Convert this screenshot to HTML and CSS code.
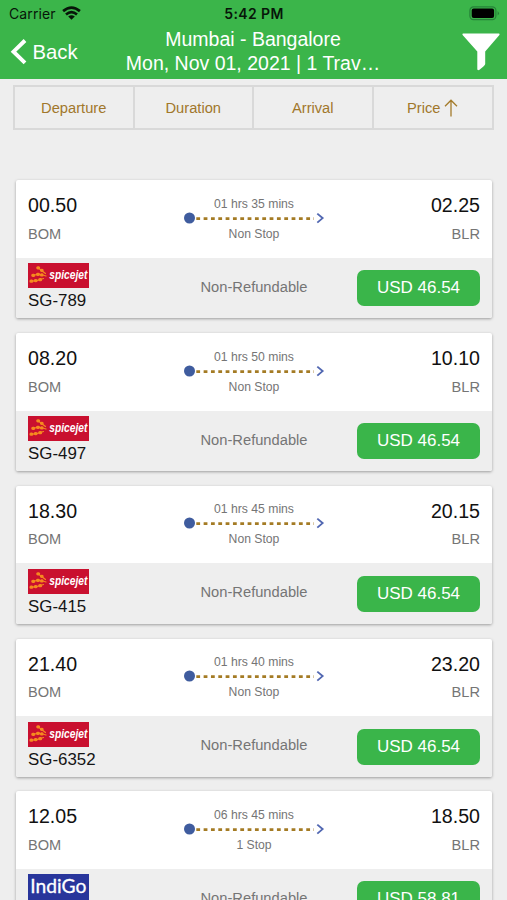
FILE: index.html
```html
<!DOCTYPE html>
<html lang="en">
<head>
<meta charset="utf-8">
<title>Flights</title>
<link rel="stylesheet" href="styles.css">
</head>
<body>
<header class="header">
  <div class="status">
    <div class="carrier"><span>Carrier</span>
      <svg width="19" height="15" viewBox="0 0 19 15" fill="none" stroke="#071509" stroke-width="2.700"><path d="M1.100 5.100Q9.500-2 17.900 5.100M4 8.500Q9.500 3.900 15 8.500"/><path d="M6.200 10.500Q9.500 7.900 12.800 10.500L9.500 13.800Z" fill="#071509" stroke="none"/></svg>
    </div>
    <div class="clock">5:42 PM</div>
    <svg class="battery" width="31" height="15" viewBox="0 0 31 15"><rect x=".9" y=".9" width="26" height="12.800" rx="3.600" fill="none" stroke="#268238" stroke-width="1.200"/><rect x="2.700" y="2.600" width="22.400" height="9.300" rx="2" fill="#000"/><path d="M28.600 5Q31.300 7.300 28.600 9.600Z" fill="#268238"/></svg>
  </div>
  <div class="nav">
    <div class="back"><svg width="17" height="26" viewBox="0 0 17 26"><path d="M15 1.500L3.500 12.700L15 23.900" fill="none" stroke="#fff" stroke-width="3.900"/></svg><span>Back</span></div>
    <div class="title"><div>Mumbai - Bangalore</div><div>Mon, Nov 01, 2021 | 1 Trav…</div></div>
    <svg class="filter" width="38" height="38" viewBox="0 0 38 38"><path d="M1 .5H37Q38 .5 37.400 2L23.200 18.500V31Q23 32.400 17.500 36.800Q15.500 38 15.300 36V18.500L.6 2Q0 .5 1 .5Z" fill="#fff"/></svg>
  </div>
</header>
<div class="sort">
  <div>Departure</div><div>Duration</div><div>Arrival</div>
  <div>Price<svg width="14" height="18" viewBox="0 0 14 18"><path d="M7 17.500V1.500M1 7.200L7 1.200L13 7.200" fill="none" stroke="#a47b2b" stroke-width="1.300"/></svg></div>
</div>
<main class="list" id="list"></main>
<script src="flights.js"></script>
</body>
</html>
```
FILE: styles.css
```css
* { box-sizing: border-box; }
body {
  margin: 0;
  height: 900px;
  overflow: hidden;
  background: #eee;
  font-family: "Liberation Sans", Arial, sans-serif;
}
svg { display: block; flex: none; }
.header { height: 79px; background: #3bb54a; }
.status {
  height: 27px;
  padding: 1px 7px 0 9px;
  display: grid;
  grid-template-columns: 1fr auto 1fr;
  align-items: center;
  font-family: Inter, "Liberation Sans", sans-serif;
  font-size: 14px;
  line-height: 20px;
  color: #071509;
}
.carrier { display: flex; align-items: center; gap: 6px; letter-spacing: .1px; }
.carrier svg { margin-top: -2px; }
.clock { font-weight: 600; font-size: 14px; letter-spacing: .4px; margin-left: -1px; }
.battery { justify-self: end; margin-top: -1px; }
.nav {
  height: 52px;
  padding: 0 7px 0 10px;
  display: grid;
  grid-template-columns: 92px 302px 1fr;
  color: #fff;
}
.back { display: flex; height: 50px; align-items: center; gap: 5.5px; font-size: 20.3px; }
.title { text-align: center; font-size: 19.5px; line-height: 24px; white-space: nowrap; }
.filter { justify-self: end; margin-top: 6px; }
.sort {
  height: 45px;
  margin: 6px 13px 0;
  display: grid;
  grid-template-columns: repeat(3, 119.5px) 1fr;
  border: 2px solid #d9d9d9;
  color: #a1772b;
  font-size: 14.7px;
}
.sort div { display: flex; align-items: center; justify-content: center; gap: 4px; border-right: 2px solid #d9d9d9; }
.sort div:last-child { border-right: 0; }
.list { padding: 50.3px 15px 0 16px; display: flex; flex-direction: column; gap: 14.75px; }
.card {
  height: 138px;
  flex: none;
  background: #fff;
  border-radius: 2px;
  overflow: hidden;
  box-shadow: 0 1px 3px rgba(0, 0, 0, .35);
}
.times {
  height: 77.5px;
  padding: 12.2px 12px 0;
  display: grid;
  grid-template-columns: 1fr 142px 1fr;
  color: #757575;
}
.arr { text-align: right; }
.time { font-size: 19.6px; line-height: 26px; color: #111; }
.code { font-size: 14.6px; line-height: 20px; margin-top: 5.3px; }
.mid { text-align: center; font-size: 12.2px; line-height: 16px; padding-top: 3.3px; }
.mid svg { width: 142px; height: 14px; margin: -1px 0 1px; }
.fare {
  height: 60.5px;
  padding: 0 12px;
  display: grid;
  grid-template-columns: 1fr 110px 1fr;
  background: #eee;
}
.airline { padding-top: 5.5px; font-size: 16.9px; line-height: 22px; color: #151515; }
.airline svg { width: 61px; height: 25px; margin-bottom: 2px; }
.airline .indigo { height: 26px; }
.refund { text-align: center; font-size: 14.7px; line-height: 58px; color: #757575; white-space: nowrap; }
.price {
  justify-self: end;
  width: 123px;
  height: 36px;
  margin-top: 12.5px;
  border-radius: 7px;
  background: #3ab54a;
  color: #fff;
  font-size: 17px;
  line-height: 36px;
  text-align: center;
}
.spice-text { font: italic bold 12.5px "Liberation Sans", sans-serif; fill: #fff; }
.indigo-text { font: 400 19px Lato, sans-serif; fill: #fff; stroke: #fff; stroke-width: .3px; }
```
FILE: flights.js
```js
const route = `<svg viewBox="0 0 142 14">
  <path d="M13.3 7.7H131" fill="none" stroke="#a47b24" stroke-width="2.8" stroke-dasharray="3.8 3.53"/>
  <circle cx="6.5" cy="7" r="5.5" fill="#3f5c9e"/>
  <path d="M134.3 2.6L139.6 7.1L134.3 11.6" fill="none" stroke="#5268b2" stroke-width="1.9"/>
</svg>`;

const logos = {
  spicejet: `<svg class="spicejet" viewBox="0 0 61 25">
    <rect width="61" height="25" fill="#c9102f"/>
    <g fill="none" stroke="#f58a1f" stroke-linecap="round">
      <path d="M10 4.8L17.5 10.5M4.5 12.5Q11 10.3 18 13M2.8 18.3Q9 18 15.5 15.5" stroke-width="1.2"/>
      <path d="M9.8 4.8h.8M13.5 7.3h.6M4.8 12.3h1M9.5 11.3h1M13.5 11.9h.6M3 18.2h.8M7.3 17.6h.8M11.8 16.7h.8" stroke-width="3.2"/>
    </g>
    <text x="21.3" y="16.4" textLength="38" lengthAdjust="spacingAndGlyphs" class="spice-text">spicejet</text>
  </svg>`,
  indigo: `<svg class="indigo" viewBox="0 0 61 26">
    <rect width="61" height="26" fill="#28359b"/>
    <text x="2.3" y="19.3" textLength="56" lengthAdjust="spacingAndGlyphs" class="indigo-text">IndiGo</text>
  </svg>`
};

const flights = [
  ["00.50", "02.25", "01 hrs 35 mins", "Non Stop", "spicejet", "SG-789", "USD 46.54"],
  ["08.20", "10.10", "01 hrs 50 mins", "Non Stop", "spicejet", "SG-497", "USD 46.54"],
  ["18.30", "20.15", "01 hrs 45 mins", "Non Stop", "spicejet", "SG-415", "USD 46.54"],
  ["21.40", "23.20", "01 hrs 40 mins", "Non Stop", "spicejet", "SG-6352", "USD 46.54"],
  ["12.05", "18.50", "06 hrs 45 mins", "1 Stop", "indigo", "", "USD 58.81"]
];

document.getElementById("list").innerHTML = flights.map(([dep, arr, duration, stops, airline, number, price]) => `
  <article class="card">
    <div class="times">
      <div><div class="time">${dep}</div><div class="code">BOM</div></div>
      <div class="mid"><div>${duration}</div>${route}<div>${stops}</div></div>
      <div class="arr"><div class="time">${arr}</div><div class="code">BLR</div></div>
    </div>
    <div class="fare">
      <div class="airline">${logos[airline]}${number}</div>
      <div class="refund">Non-Refundable</div>
      <div class="price">${price}</div>
    </div>
  </article>`).join("");
```
